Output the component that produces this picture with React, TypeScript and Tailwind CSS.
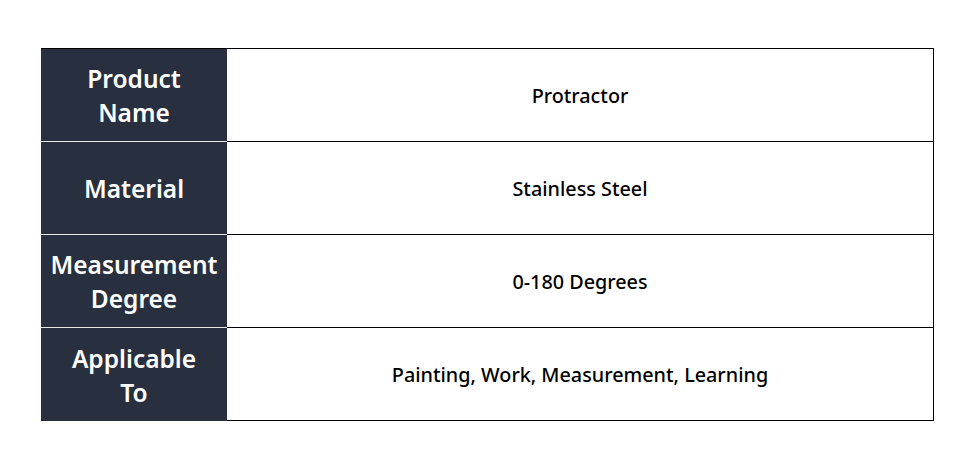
import React from "react";

const rows = [
  { label: ["Product", "Name"], value: "Protractor" },
  { label: ["Material"], value: "Stainless Steel" },
  { label: ["Measurement", "Degree"], value: "0-180 Degrees" },
  { label: ["Applicable", "To"], value: "Painting, Work, Measurement, Learning" },
];

export default function App() {
  return (
    <div
      className="w-[970px] h-[461px] bg-white pt-[48px] pl-[41px]"
      style={{ fontFamily: '"Noto Sans", "Open Sans", sans-serif' }}
    >
      <div className="w-[893px] border-t border-black border-r">
        {rows.map((r, i) => (
          <div key={i} className="flex h-[93px]">
            <div
              className={`w-[186px] bg-[#282f3f] flex flex-col items-center justify-center pt-[2px] text-white text-[24.5px] leading-[34px] font-semibold ${
                i < rows.length - 1 ? "border-b border-[#e8e8e8]" : ""
              }`}
            >
              {r.label.map((l) => (
                <span key={l}>{l}</span>
              ))}
            </div>
            <div className="flex-1 border-b border-black flex items-center justify-center pt-[1px] text-[19.8px] font-medium text-black">
              {r.value}
            </div>
          </div>
        ))}
      </div>
    </div>
  );
}
